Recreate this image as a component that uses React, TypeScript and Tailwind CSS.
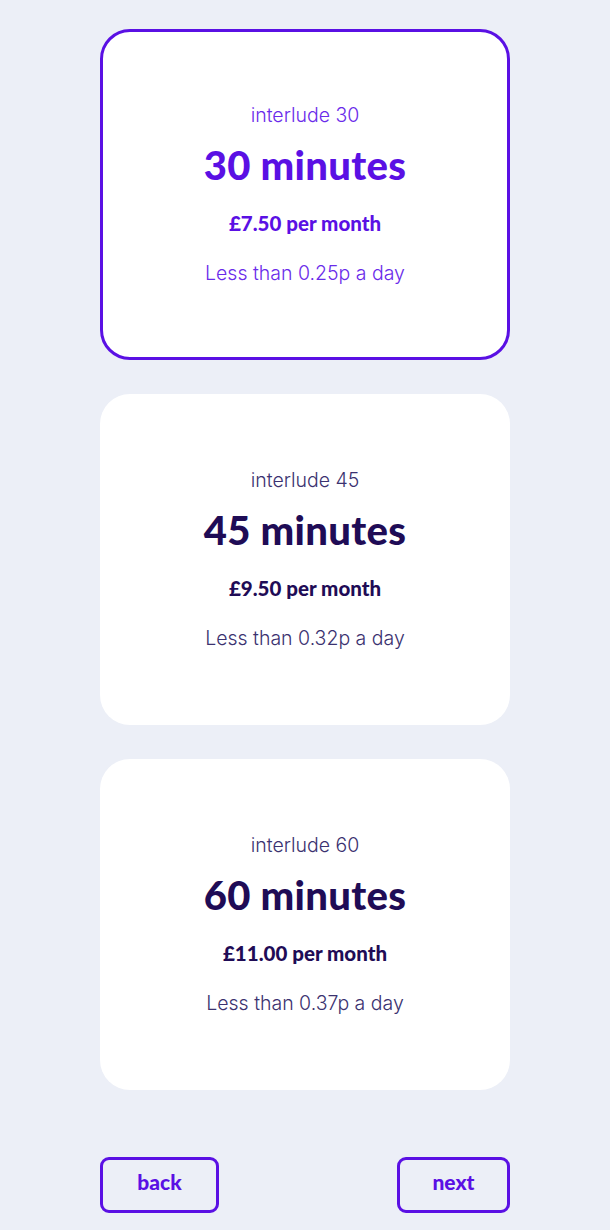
const plans = [
  { name: "interlude 30", title: "30 minutes", price: "£7.50", daily: "Less than 0.25p a day", selected: true },
  { name: "interlude 45", title: "45 minutes", price: "£9.50", daily: "Less than 0.32p a day", selected: false },
  { name: "interlude 60", title: "60 minutes", price: "£11.00", daily: "Less than 0.37p a day", selected: false },
];

export default function App() {
  return (
    <div className="min-h-[1230px] w-full bg-[#eceff7] pt-[29px]">
      <div className="mx-auto flex w-[410px] flex-col gap-[34px]">
        {plans.map((p) => (
          <div
            key={p.name}
            className={`flex h-[331px] flex-col items-center justify-center rounded-[30px] bg-white ${
              p.selected ? "border-[3px] border-[#5a10e4] text-[#5a10e4]" : "text-[#1f0c56]"
            }`}
          >
            <p
              className={`font-['Inter',sans-serif] text-[19.5px] font-light leading-none ${
                p.selected ? "text-[#6a2bea]" : "text-[#3b3270]"
              }`}
            >
              {p.name}
            </p>
            <p className="mt-[20px] font-['Lato',sans-serif] text-[40px] font-black leading-none tracking-[0.3px]">
              {p.title}
            </p>
            <p className="mt-[28px] font-['Lato',sans-serif] text-[20.5px] font-black leading-none">
              {p.price} per month
            </p>
            <p
              className={`mt-[30px] font-['Inter',sans-serif] text-[19.5px] font-light leading-none ${
                p.selected ? "text-[#6a2bea]" : "text-[#3b3270]"
              }`}
            >
              {p.daily}
            </p>
          </div>
        ))}
        <div className="mt-[33px] flex justify-between">
          <button
            type="button"
            className="h-[56px] w-[119px] rounded-[9px] border-[3px] border-[#5a10e4] pb-[6px] font-['Lato',sans-serif] text-[21px] font-black text-[#5a10e4]"
          >
            back
          </button>
          <button
            type="button"
            className="h-[56px] w-[113px] rounded-[9px] border-[3px] border-[#5a10e4] pb-[6px] font-['Lato',sans-serif] text-[21px] font-black text-[#5a10e4]"
          >
            next
          </button>
        </div>
      </div>
    </div>
  );
}
